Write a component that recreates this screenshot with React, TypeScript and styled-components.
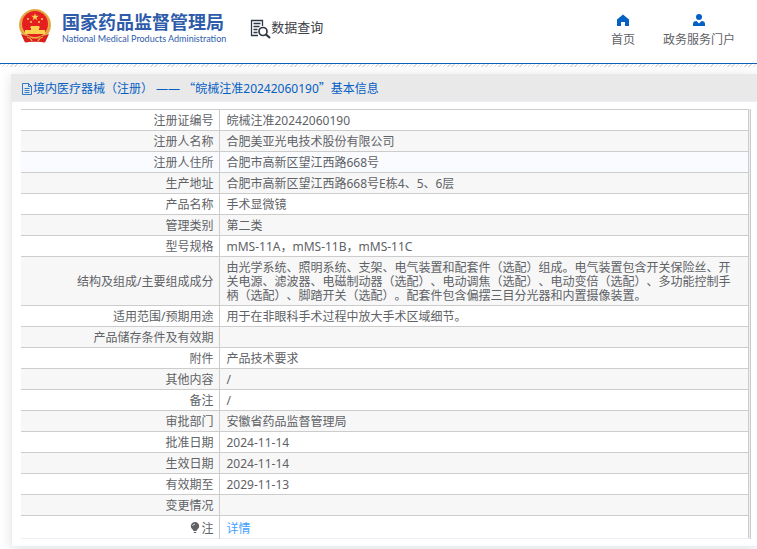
import React from "react";
import styled, { createGlobalStyle } from "styled-components";

const GlobalStyle = createGlobalStyle`
  * { box-sizing: border-box; }
  body {
    margin: 0;
    background: #fff;
    color: #606266;
    font: 12px/14px "Noto Sans", "Noto Sans CJK SC", sans-serif;
    text-spacing-trim: space-all;
  }
  a { text-decoration: none; }
`;

const Page = styled.div`
  overflow: hidden;
  padding-bottom: 8px;
`;

const Header = styled.header`
  display: flex;
  align-items: flex-start;
  height: 64px;
  padding: 0 22px 0 18px;
  border-bottom: 1px solid #0a62ba;
`;

const Stripe = styled.div`
  height: 3px;
  margin-bottom: 7px;
  background: repeating-linear-gradient(135deg, #dcdcdc 0 1px, #fff 1px 3px);
`;

const Brand = styled.a`
  display: flex;
  gap: 10px;
  padding-top: 8px;
  color: #2e5cab;
`;

const BrandText = styled.span`
  display: flex;
  flex-direction: column;
  padding-top: 4px;
`;

const BrandName = styled.strong`
  font-size: 18px;
  line-height: 21px;
  font-weight: 700;
  white-space: nowrap;
`;

const BrandEnglish = styled.span`
  font: 400 9px/12px Lato, sans-serif;
  white-space: nowrap;
`;

const Section = styled.h1`
  display: flex;
  align-items: flex-start;
  margin: 18px auto 0 24px;
  color: #3c3f48;
  font-size: 13px;
  line-height: 18px;
  font-weight: 400;
  white-space: nowrap;
`;

const Nav = styled.nav`
  display: flex;
  gap: 28px;
  padding-top: 14px;
`;

const NavLink = styled.a`
  display: flex;
  flex-direction: column;
  align-items: center;
  gap: 7px;
  color: #606266;
  white-space: nowrap;
  svg { color: #0560c4; }
`;

const Panel = styled.main`
  margin-left: 11px;
  border: 1px solid #ebeef5;
  border-width: 0 0 1px 1px;
  box-shadow: 0 2px 12px rgba(0, 0, 0, 0.12);
`;

const PanelTitle = styled.h2`
  display: flex;
  align-items: center;
  height: 28px;
  margin: 0 0 0 -1px;
  padding: 2px 11px 0;
  background: #e9e9e9;
  border-bottom: 1px solid #ebeef5;
  color: #0560c4;
  font-size: 12px;
  font-weight: 400;
  white-space: nowrap;
`;

const TitleText = styled.span`
  padding-left: 1px;
`;

const WidePunctuation = styled.span`
  font-family: "Noto Sans CJK SC", sans-serif;
`;

const TableFrame = styled.div`
  margin: 7px 6px 7px 9px;
  padding-right: 1px;
  border-right: 1px solid #ccc;
  background: #ebeef5;
`;

const Table = styled.table`
  width: 100%;
  border-collapse: collapse;
  table-layout: fixed;
  background: #fff;
  border-right: 1px solid #ccc;
`;

const Row = styled.tr<{ $tone: string }>`
  background: ${(p) => p.$tone};
  border-top: 1px solid #ccc;
  &:last-child {
    border-bottom: 1px solid #ebeef5;
  }
  &:last-child > * {
    padding-top: 6px;
    padding-bottom: 2px;
  }
`;

const Label = styled.th`
  width: 198px;
  padding: 4px 5px 2px;
  border-right: 1px solid #ccc;
  font-weight: 400;
  text-align: right;
  svg { vertical-align: -1px; margin-right: 1px; }
`;

const Value = styled.td`
  height: 21px;
  padding: 4px 12px 2px 7px;
`;

const DetailLink = styled.a`
  color: #409eff;
`;

const Emblem = () => (
  <svg width="34" height="36" viewBox="0 0 34 36" aria-hidden="true">
    <path d="M7 27 8 34.500q9-2 18 0L27 27Z" fill="#d9201d" />
    <circle cx="17" cy="17" r="16" fill="#e9b04a" />
    <circle cx="17" cy="17" r="14.500" fill="none" stroke="#d9903c" strokeDasharray="2 1" />
    <circle cx="17" cy="16" r="13" fill="#e51f20" />
    <path d="m17 5 .9 2.700h2.900l-2.300 1.700.9 2.800-2.400-1.700-2.400 1.700.9-2.800-2.300-1.700h2.900Z" fill="#fbd250" />
    <g fill="#fbd250">
      <circle cx="10" cy="11" r="1" /><circle cx="24" cy="11" r="1" />
      <circle cx="13" cy="14" r="1" /><circle cx="21" cy="14" r="1" />
      <path d="M13 18h8l1 2h-1v2h6v4H7v-4h6v-2h-1Z" />
    </g>
    <path d="M3 26q4 2 8 2l2 2h8l2-2q4 0 8-2l-4 8.500-3-1H10l-3 1Z" fill="#d9201d" />
    <path d="M9 29q4 1 5 4M25 29q-4 1-5 4M14 30h6" fill="none" stroke="#eeb94a" strokeWidth="1.200" />
  </svg>
);

const SearchDocument = () => (
  <svg width="21" height="21" viewBox="0 0 21 21" fill="none" stroke="#2f3645" aria-hidden="true">
    <path d="M8 17.500H1.500v-15h11V8M3.500 5.500h7M3.500 8.500h6M3.500 11.500h4M3.500 14.500h4" strokeWidth="1.300" />
    <circle cx="13" cy="13.500" r="4" strokeWidth="1.700" />
    <path d="m16 16.500 4 3.500" strokeWidth="2.200" />
  </svg>
);

const Home = () => (
  <svg width="12" height="12" viewBox="0 0 12 12" fill="currentColor" aria-hidden="true">
    <path d="M6 .5 0 5.500V12h4V8h4v4h4V5.500Z" />
  </svg>
);

const Person = () => (
  <svg width="12" height="12" viewBox="0 0 12 12" fill="currentColor" aria-hidden="true">
    <circle cx="6" cy="3" r="3" />
    <path d="M0 12V10q0-3 3.500-3L6 9.500 8.500 7Q12 7 12 10v2Z" />
  </svg>
);

const Document = () => (
  <svg width="10" height="12" viewBox="0 0 10 12" fill="none" stroke="currentColor" aria-hidden="true">
    <path d="M.5.5h6l3 3v8h-9ZM6.500.500v3h3M2.500 5.500h5M2.500 7.500h5M2.500 9.500h5" strokeWidth=".8" />
  </svg>
);

const Bulb = () => (
  <svg width="10" height="12" viewBox="0 0 10 12" fill="#606266" aria-hidden="true">
    <path d="M5 0a4.200 4.200 0 0 1 4.200 4.200C9.200 6.500 7 7 6.500 9h-3C3 7 .8 6.500.8 4.200A4.200 4.200 0 0 1 5 0Z" />
    <path d="M3.500 10h3L6 11H4Z" />
    <path d="M2.500 4Q3 2 5 2" fill="none" stroke="#fff" strokeWidth=".7" />
  </svg>
);

const records: [string, string][] = [
  ["注册证编号", "皖械注准20242060190"],
  ["注册人名称", "合肥美亚光电技术股份有限公司"],
  ["注册人住所", "合肥市高新区望江西路668号"],
  ["生产地址", "合肥市高新区望江西路668号E栋4、5、6层"],
  ["产品名称", "手术显微镜"],
  ["管理类别", "第二类"],
  ["型号规格", "mMS-11A，mMS-11B，mMS-11C"],
  ["结构及组成/主要组成成分", "由光学系统、照明系统、支架、电气装置和配套件（选配）组成。电气装置包含开关保险丝、开关电源、滤波器、电磁制动器（选配）、电动调焦（选配）、电动变倍（选配）、多功能控制手柄（选配）、脚踏开关（选配）。配套件包含偏摆三目分光器和内置摄像装置。"],
  ["适用范围/预期用途", "用于在非眼科手术过程中放大手术区域细节。"],
  ["产品储存条件及有效期", ""],
  ["附件", "产品技术要求"],
  ["其他内容", "/"],
  ["备注", "/"],
  ["审批部门", "安徽省药品监督管理局"],
  ["批准日期", "2024-11-14"],
  ["生效日期", "2024-11-14"],
  ["有效期至", "2029-11-13"],
  ["变更情况", ""],
];

const rowTone = (index: number) =>
  index === 2 ? "#f9fbfe" : index % 2 ? "#f7f7f7" : "#fff";

export default function App() {
  return (
    <Page lang="zh-CN">
      <GlobalStyle />
      <Header>
        <Brand href="#">
          <Emblem />
          <BrandText>
            <BrandName>国家药品监督管理局</BrandName>
            <BrandEnglish>National Medical Products Administration</BrandEnglish>
          </BrandText>
        </Brand>
        <Section><SearchDocument />数据查询</Section>
        <Nav>
          <NavLink href="#"><Home />首页</NavLink>
          <NavLink href="#"><Person />政务服务门户</NavLink>
        </Nav>
      </Header>
      <Stripe />
      <Panel>
        <PanelTitle>
          <Document />
          <TitleText>
            境内医疗器械（注册） —— <WidePunctuation>“</WidePunctuation>皖械注准20242060190<WidePunctuation>”</WidePunctuation>基本信息
          </TitleText>
        </PanelTitle>
        <TableFrame>
          <Table>
            <tbody>
              {records.map(([label, value], index) => (
                <Row key={label} $tone={rowTone(index)}>
                  <Label scope="row">{label}</Label>
                  <Value>{value}</Value>
                </Row>
              ))}
              <Row $tone="#fff">
                <Label scope="row"><Bulb />注</Label>
                <Value><DetailLink href="#">详情</DetailLink></Value>
              </Row>
            </tbody>
          </Table>
        </TableFrame>
      </Panel>
    </Page>
  );
}
